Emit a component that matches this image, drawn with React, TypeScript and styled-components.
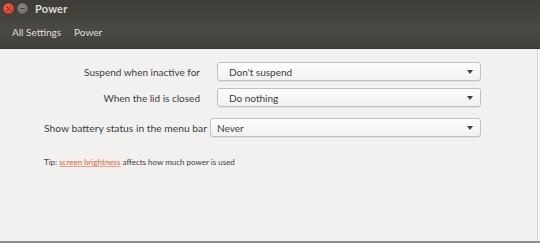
import React from "react";
import styled, { createGlobalStyle } from "styled-components";

const Global = createGlobalStyle`
  html, body { margin: 0; padding: 0; background: #f2f1f0; }
  body { width: 540px; height: 243px; overflow: hidden; }
  * { box-sizing: border-box; }
`;

const FONT = `"Lato", "Noto Sans", "DejaVu Sans", sans-serif`;

const Window = styled.div`
  width: 540px;
  height: 243px;
  display: flex;
  flex-direction: column;
  font-family: ${FONT};
  background: #f2f1f0;
  overflow: hidden;
`;

const Header = styled.div`
  height: 49px;
  flex: none;
  display: flex;
  flex-direction: column;
  background: linear-gradient(#3d3c38 0%, #44433e 35%, #4a4944 60%, #403f3a 100%);
  border-bottom: 1px solid #34332f;
`;

const TitleBar = styled.div`
  height: 17px;
  display: flex;
  align-items: center;
  padding-left: 3px;
  gap: 3px;
`;

const WinButton = styled.div<{ $kind: "close" | "min" }>`
  width: 11px;
  height: 11px;
  border-radius: 50%;
  display: flex;
  align-items: center;
  justify-content: center;
  background: ${(p) =>
    p.$kind === "close"
      ? "radial-gradient(circle at 45% 40%, #f06a4f 0%, #d9432b 60%, #b63520 100%)"
      : "radial-gradient(circle at 45% 40%, #8a8984 0%, #6f6e69 60%, #5c5b57 100%)"};
  box-shadow: 0 0 0 0.5px rgba(0, 0, 0, 0.4);
`;

const Title = styled.div`
  margin-left: 4px;
  color: #dfdbd2;
  font-weight: 700;
  font-size: 11px;
  letter-spacing: 0.2px;
`;

const Toolbar = styled.div`
  flex: 1;
  display: flex;
  align-items: center;
  padding: 0 0 1px 12px;
  gap: 13px;
`;

const Crumb = styled.div`
  color: #e2dfd8;
  font-size: 10px;
`;

const Body = styled.div`
  flex: 1;
  display: flex;
  border-bottom: 2px solid #8c8c8a;
`;

const Main = styled.div`
  flex: 1;
  display: flex;
  flex-direction: column;
  padding: 13px 0 0 44px;
`;

const RightEdge = styled.div`
  width: 3px;
  border-left: 1px solid #d6d5d2;
  background: #f7f7f6;
`;

const FormGroup = styled.div<{ $label: number; $gap: number; $combo: number }>`
  display: grid;
  grid-template-columns: ${(p) => p.$label}px ${(p) => p.$combo}px;
  column-gap: ${(p) => p.$gap}px;
  row-gap: 7px;
  align-items: center;
  margin-bottom: 11px;
`;

const Label = styled.div<{ $size?: number }>`
  text-align: right;
  color: #3c3c3c;
  font-size: ${(p) => p.$size ?? 10}px;
  white-space: nowrap;
`;

const Combo = styled.div`
  height: 19px;
  display: flex;
  align-items: center;
  justify-content: space-between;
  padding: 0 7px 0 11px;
  border: 1px solid #c3c0ba;
  border-radius: 3px;
  background: linear-gradient(#fdfdfc, #f2f1ef);
  box-shadow: 0 1px 0 rgba(0, 0, 0, 0.06);
  color: #3c3c3c;
  font-size: 10px;
`;

const ComboTip = styled(Combo)`
  padding-left: 6px;
`;

const Arrow = styled.div`
  width: 0;
  height: 0;
  border-left: 3.5px solid transparent;
  border-right: 3.5px solid transparent;
  border-top: 4px solid #3f3f3f;
`;

const Tip = styled.div`
  margin-top: 9px;
  font-size: 8px;
  color: #3c3c3c;
`;

const Link = styled.span`
  color: #e2652f;
  text-decoration: underline;
  text-decoration-color: #e8a183;
`;

export default function App() {
  return (
    <Window>
      <Global />
      <Header>
        <TitleBar>
          <WinButton $kind="close">
            <svg width="5" height="5" viewBox="0 0 5 5">
              <path d="M0.5 0.5 L4.5 4.5 M4.5 0.5 L0.5 4.5" stroke="#5a1a10" strokeWidth="1" />
            </svg>
          </WinButton>
          <WinButton $kind="min">
            <svg width="5" height="5" viewBox="0 0 5 5">
              <path d="M0.5 2.5 L4.5 2.5" stroke="#3f3e3a" strokeWidth="1" />
            </svg>
          </WinButton>
          <Title>Power</Title>
        </TitleBar>
        <Toolbar>
          <Crumb>All Settings</Crumb>
          <Crumb>Power</Crumb>
        </Toolbar>
      </Header>
      <Body>
        <Main>
          <FormGroup $label={156} $gap={17} $combo={264}>
            <Label>Suspend when inactive for</Label>
            <Combo>
              <span>Don't suspend</span>
              <Arrow />
            </Combo>
            <Label>When the lid is closed</Label>
            <Combo>
              <span>Do nothing</span>
              <Arrow />
            </Combo>
          </FormGroup>
          <FormGroup $label={160} $gap={6} $combo={271}>
            <Label $size={10.3}>Show battery status in the menu bar</Label>
            <ComboTip>
              <span>Never</span>
              <Arrow />
            </ComboTip>
          </FormGroup>
          <Tip>
            Tip: <Link>screen brightness</Link> affects how much power is used
          </Tip>
        </Main>
        <RightEdge />
      </Body>
    </Window>
  );
}
